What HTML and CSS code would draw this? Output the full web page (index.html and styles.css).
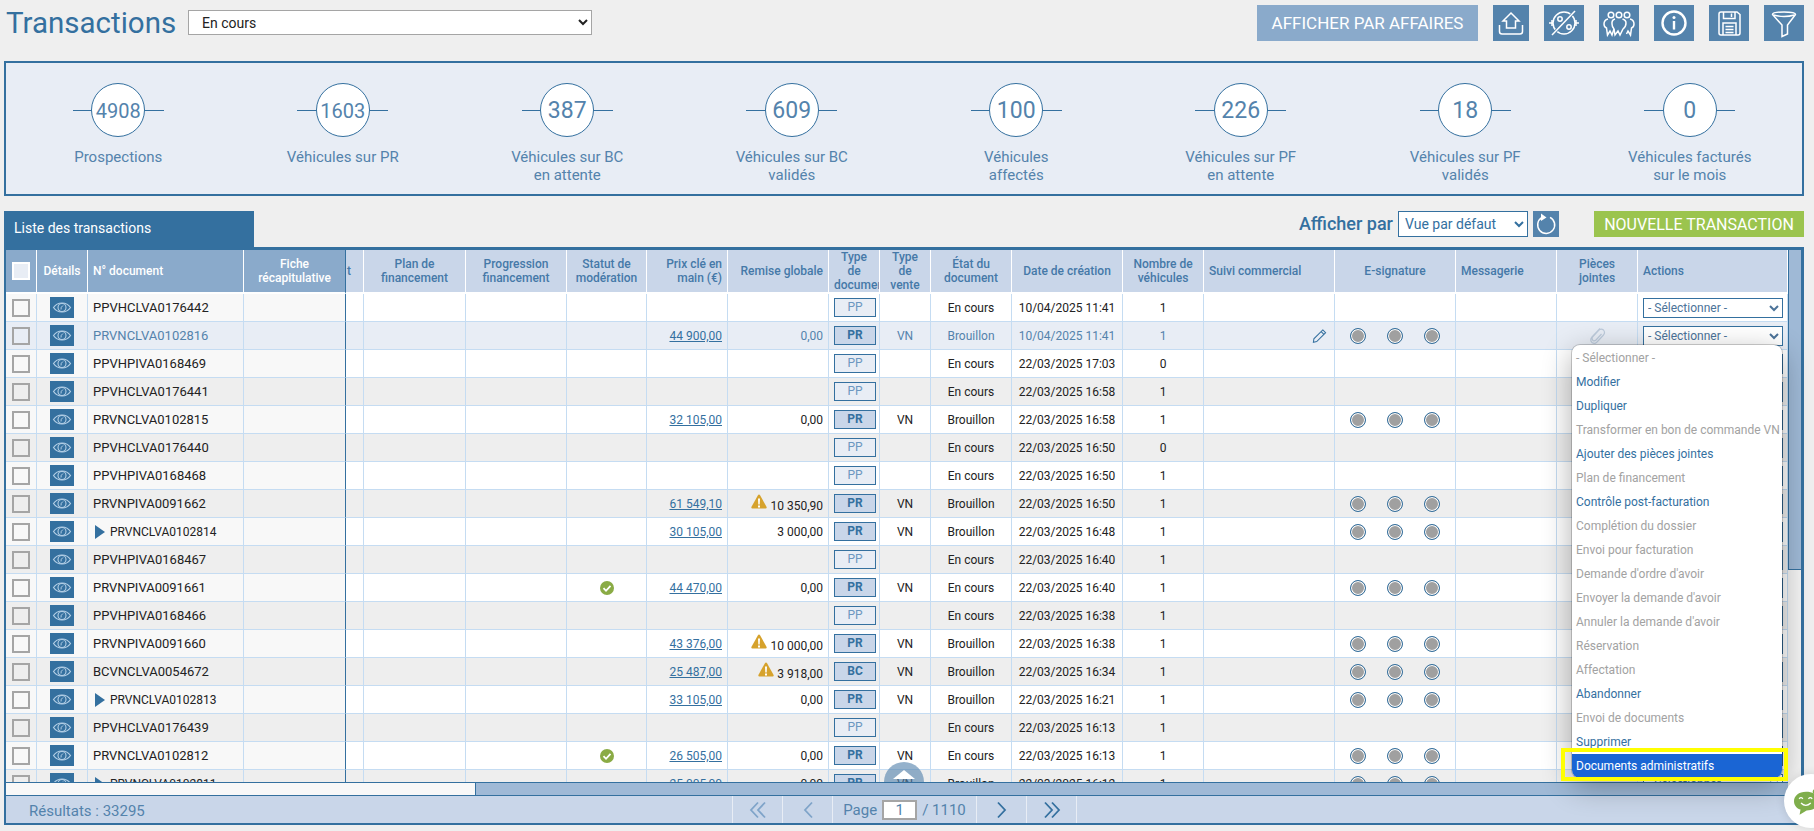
FILE: index.html
```html
<!DOCTYPE html>
<html lang="fr">
<head>
<meta charset="utf-8">
<title>Transactions</title>
<link rel="stylesheet" href="styles.css">
</head>
<body>
<svg class="defs" aria-hidden="true">
  <symbol id="eye" viewBox="0 0 24 21"><path d="M3.5 10.5C7.5 4.5 16.5 4.5 20.500 10.5C16.500 16.500 7.500 16.500 3.500 10.500Z" fill="none" stroke="#b4cfe6" stroke-width="1.2"/><circle cx="12" cy="10.500" r="4" fill="none" stroke="#b4cfe6" stroke-width="1.100"/><path d="M11 12.500Q10.500 10 13 8.500" fill="none" stroke="#b4cfe6"/></symbol>
  <symbol id="tri" viewBox="0 0 10 14"><path d="M0 0L10 7L0 14Z" fill="#34709f"/></symbol>
  <symbol id="warn" viewBox="0 0 16 15"><path d="M8 .5Q8.700 .5 9.200 1.400L15.600 13Q16 14.500 14.600 14.500H1.400Q0 14.500 .4 13L6.800 1.400Q7.300 .5 8 .5Z" fill="#d6a22c"/><path d="M7 4.500h2l-.3 6h-1.400ZM7 11.500h2v2H7Z" fill="#fff"/></symbol>
  <symbol id="ok" viewBox="0 0 14 14"><circle cx="7" cy="7" r="7" fill="#8aab45"/><path d="M3.500 7.200L6 9.800L10.500 4.800" fill="none" stroke="#fff" stroke-width="1.800"/></symbol>
</svg>

<div class="page">
  <header class="topbar">
    <h1 class="title">Transactions</h1>
    <select class="state-select"><option>En cours</option></select>
    <div class="spacer"></div>
    <button class="btn-affaires">AFFICHER PAR AFFAIRES</button>
    <div class="tools">
      <span class="tool tool-narrow"><svg viewBox="0 0 36 36"><path d="M18 8L26 16H22.500V23H13.500V16H10Z M6.500 20V26.500Q6.500 29 9 29H27Q29.500 29 29.500 26.500V20"/></svg></span>
      <span class="tool"><svg viewBox="0 0 40 36"><circle cx="20" cy="18" r="11"/><path d="M5 18H9M31 18H35M8 15V21M32 15V21"/><circle cx="16" cy="14" r="2.200"/><circle cx="25" cy="22" r="2.200"/><path class="cut" d="M9 29L32 5"/><path d="M8 30L31 6"/></svg></span>
      <span class="tool"><svg viewBox="0 0 40 36"><circle cx="12" cy="10" r="2.800"/><circle cx="20" cy="10" r="2.800"/><circle cx="28" cy="10" r="2.800"/><path d="M9 14Q5 15 5 19Q5 22 7.500 23L8.500 30L11 26L13 30L15 24"/><path d="M16 14Q12.500 15 13 19Q13 22 15 24L16 30L19 26L21 30L24 24Q27 22 27 18Q27 15 23.500 14"/><path d="M31 14Q35 15 35 19Q35 22 32.500 23L31.500 30L29 26L27.500 29"/></svg></span>
      <span class="tool"><svg viewBox="0 0 40 36"><circle class="thick" cx="20" cy="18" r="11.500"/><circle class="dot" cx="20" cy="12.500" r="1.500"/><path class="thick" d="M20 16V24.500"/></svg></span>
      <span class="tool"><svg viewBox="0 0 40 36"><path d="M10 9Q10 7 12 7H28L31 9.500V28Q31 30 29 30H12Q10 30 10 28Z"/><path d="M14.500 7V13.500H26V7M22.500 8.500V12"/><path d="M14 30V18H27V30M16.500 21.500H24.500M16.500 24.500H24.500M16.500 27.500H24.500"/></svg></span>
      <span class="tool"><svg viewBox="0 0 40 36"><path d="M8.500 9.500Q8.500 7 20 7Q31.500 7 31.500 9.500L23.500 20V29L18 31.500V20Z"/><path d="M9.500 10Q20 13 30.500 10"/></svg></span>
    </div>
  </header>

  <section class="stats">
    <div class="stat"><div class="ring"><span class="num num-sm">4908</span></div><p>Prospections</p></div>
    <div class="stat"><div class="ring"><span class="num num-sm">1603</span></div><p>Véhicules sur PR</p></div>
    <div class="stat"><div class="ring"><span class="num">387</span></div><p>Véhicules sur BC<br>en attente</p></div>
    <div class="stat"><div class="ring"><span class="num">609</span></div><p>Véhicules sur BC<br>validés</p></div>
    <div class="stat"><div class="ring"><span class="num">100</span></div><p>Véhicules<br>affectés</p></div>
    <div class="stat"><div class="ring"><span class="num">226</span></div><p>Véhicules sur PF<br>en attente</p></div>
    <div class="stat"><div class="ring"><span class="num">18</span></div><p>Véhicules sur PF<br>validés</p></div>
    <div class="stat"><div class="ring"><span class="num">0</span></div><p>Véhicules facturés<br>sur le mois</p></div>
  </section>

  <div class="tabbar">
    <div class="tab">Liste des transactions</div>
    <div class="spacer"></div>
    <span class="view-label">Afficher par</span>
    <select class="view-select"><option>Vue par défaut</option></select>
    <span class="refresh"><svg viewBox="0 0 26 26"><path d="M9 6.500A8.500 8.500 0 1 0 17 6.300"/><path class="fillw" d="M8 2.500L13.500 6.500L8 10Z"/></svg></span>
    <button class="btn-new">NOUVELLE TRANSACTION</button>
  </div>

  <section class="panel">
    <div class="grid-row">
      <div class="table-wrap">
        <table class="tx">
          <colgroup><col class="w31"><col class="w51"><col class="w156"><col class="w102"><col class="w18"><col class="w102"><col class="w101"><col class="w80"><col class="w81"><col class="w101"><col class="w51"><col class="w51"><col class="w81"><col class="w111"><col class="w81"><col class="w131"><col class="w121"><col class="w101"><col class="w81"><col class="w150"></colgroup>
          <thead><tr>
            <th><span class="cb cb-head"></span></th><th>Détails</th><th class="l">N° document</th><th>Fiche récapitulative</th><th class="clip">t</th><th>Plan de financement</th><th>Progression financement</th><th>Statut de modération</th><th class="r">Prix clé en main (€)</th><th class="r">Remise globale</th><th>Type de document</th><th>Type de vente</th><th>État du document</th><th>Date de création</th><th>Nombre de véhicules</th><th class="l">Suivi commercial</th><th>E-signature</th><th class="l">Messagerie</th><th>Pièces jointes</th><th class="l">Actions</th>
          </tr></thead>
          <tbody>
            <tr class="w"><td><span class="cb"></span></td><td><svg class="eye"><use href="#eye"/></svg></td><td class="l">PPVHCLVA0176442</td><td></td><td></td><td></td><td></td><td></td><td></td><td></td><td><b class="bd pp">PP</b></td><td></td><td>En cours</td><td>10/04/2025 11:41</td><td>1</td><td></td><td></td><td></td><td></td><td class="l"><select class="act"><option>- Sélectionner -</option></select></td></tr>
            <tr class="h"><td><span class="cb"></span></td><td><svg class="eye"><use href="#eye"/></svg></td><td class="l">PRVNCLVA0102816</td><td></td><td></td><td></td><td></td><td></td><td class="r"><a href="#">44 900,00</a></td><td class="r">0,00</td><td><b class="bd pr">PR</b></td><td>VN</td><td>Brouillon</td><td>10/04/2025 11:41</td><td>1</td><td class="r"><svg class="pencil" viewBox="0 0 16 16"><path d="M11.500 1.500L14.500 4.500L5 14L1.500 14.800L2 11ZM9.800 3.300L12.700 6.200"/></svg></td><td><div class="dots"><i></i><i></i><i></i></div></td><td></td><td><svg class="clipi" viewBox="0 0 18 20"><path d="M12 2.500L4 11Q1.500 14 4 16.500Q6.500 18.500 9 16L15.500 9Q17.500 6.500 15.500 4Q13 2 10.500 4.500L4.500 11Q3.500 13 5 14.500Q6.500 15.500 8 14L13.500 8"/></svg></td><td class="l"><select class="act"><option>- Sélectionner -</option></select></td></tr>
            <tr class="w"><td><span class="cb"></span></td><td><svg class="eye"><use href="#eye"/></svg></td><td class="l">PPVHPIVA0168469</td><td></td><td></td><td></td><td></td><td></td><td></td><td></td><td><b class="bd pp">PP</b></td><td></td><td>En cours</td><td>22/03/2025 17:03</td><td>0</td><td></td><td></td><td></td><td></td><td class="l"><select class="act"><option>- Sélectionner -</option></select></td></tr>
            <tr class="g"><td><span class="cb"></span></td><td><svg class="eye"><use href="#eye"/></svg></td><td class="l">PPVHCLVA0176441</td><td></td><td></td><td></td><td></td><td></td><td></td><td></td><td><b class="bd pp">PP</b></td><td></td><td>En cours</td><td>22/03/2025 16:58</td><td>1</td><td></td><td></td><td></td><td></td><td class="l"><select class="act"><option>- Sélectionner -</option></select></td></tr>
            <tr class="w"><td><span class="cb"></span></td><td><svg class="eye"><use href="#eye"/></svg></td><td class="l">PRVNCLVA0102815</td><td></td><td></td><td></td><td></td><td></td><td class="r"><a href="#">32 105,00</a></td><td class="r">0,00</td><td><b class="bd pr">PR</b></td><td>VN</td><td>Brouillon</td><td>22/03/2025 16:58</td><td>1</td><td></td><td><div class="dots"><i></i><i></i><i></i></div></td><td></td><td></td><td class="l"><select class="act"><option>- Sélectionner -</option></select></td></tr>
            <tr class="g"><td><span class="cb"></span></td><td><svg class="eye"><use href="#eye"/></svg></td><td class="l">PPVHCLVA0176440</td><td></td><td></td><td></td><td></td><td></td><td></td><td></td><td><b class="bd pp">PP</b></td><td></td><td>En cours</td><td>22/03/2025 16:50</td><td>0</td><td></td><td></td><td></td><td></td><td class="l"><select class="act"><option>- Sélectionner -</option></select></td></tr>
            <tr class="w"><td><span class="cb"></span></td><td><svg class="eye"><use href="#eye"/></svg></td><td class="l">PPVHPIVA0168468</td><td></td><td></td><td></td><td></td><td></td><td></td><td></td><td><b class="bd pp">PP</b></td><td></td><td>En cours</td><td>22/03/2025 16:50</td><td>1</td><td></td><td></td><td></td><td></td><td class="l"><select class="act"><option>- Sélectionner -</option></select></td></tr>
            <tr class="g"><td><span class="cb"></span></td><td><svg class="eye"><use href="#eye"/></svg></td><td class="l">PRVNPIVA0091662</td><td></td><td></td><td></td><td></td><td></td><td class="r"><a href="#">61 549,10</a></td><td class="r"><svg class="warn"><use href="#warn"/></svg>10 350,90</td><td><b class="bd pr">PR</b></td><td>VN</td><td>Brouillon</td><td>22/03/2025 16:50</td><td>1</td><td></td><td><div class="dots"><i></i><i></i><i></i></div></td><td></td><td></td><td class="l"><select class="act"><option>- Sélectionner -</option></select></td></tr>
            <tr class="w"><td><span class="cb"></span></td><td><svg class="eye"><use href="#eye"/></svg></td><td class="l child"><svg class="tri"><use href="#tri"/></svg>PRVNCLVA0102814</td><td></td><td></td><td></td><td></td><td></td><td class="r"><a href="#">30 105,00</a></td><td class="r">3 000,00</td><td><b class="bd pr">PR</b></td><td>VN</td><td>Brouillon</td><td>22/03/2025 16:48</td><td>1</td><td></td><td><div class="dots"><i></i><i></i><i></i></div></td><td></td><td></td><td class="l"><select class="act"><option>- Sélectionner -</option></select></td></tr>
            <tr class="g"><td><span class="cb"></span></td><td><svg class="eye"><use href="#eye"/></svg></td><td class="l">PPVHPIVA0168467</td><td></td><td></td><td></td><td></td><td></td><td></td><td></td><td><b class="bd pp">PP</b></td><td></td><td>En cours</td><td>22/03/2025 16:40</td><td>1</td><td></td><td></td><td></td><td></td><td class="l"><select class="act"><option>- Sélectionner -</option></select></td></tr>
            <tr class="w"><td><span class="cb"></span></td><td><svg class="eye"><use href="#eye"/></svg></td><td class="l">PRVNPIVA0091661</td><td></td><td></td><td></td><td></td><td><svg class="ok"><use href="#ok"/></svg></td><td class="r"><a href="#">44 470,00</a></td><td class="r">0,00</td><td><b class="bd pr">PR</b></td><td>VN</td><td>En cours</td><td>22/03/2025 16:40</td><td>1</td><td></td><td><div class="dots"><i></i><i></i><i></i></div></td><td></td><td></td><td class="l"><select class="act"><option>- Sélectionner -</option></select></td></tr>
            <tr class="g"><td><span class="cb"></span></td><td><svg class="eye"><use href="#eye"/></svg></td><td class="l">PPVHPIVA0168466</td><td></td><td></td><td></td><td></td><td></td><td></td><td></td><td><b class="bd pp">PP</b></td><td></td><td>En cours</td><td>22/03/2025 16:38</td><td>1</td><td></td><td></td><td></td><td></td><td class="l"><select class="act"><option>- Sélectionner -</option></select></td></tr>
            <tr class="w"><td><span class="cb"></span></td><td><svg class="eye"><use href="#eye"/></svg></td><td class="l">PRVNPIVA0091660</td><td></td><td></td><td></td><td></td><td></td><td class="r"><a href="#">43 376,00</a></td><td class="r"><svg class="warn"><use href="#warn"/></svg>10 000,00</td><td><b class="bd pr">PR</b></td><td>VN</td><td>Brouillon</td><td>22/03/2025 16:38</td><td>1</td><td></td><td><div class="dots"><i></i><i></i><i></i></div></td><td></td><td></td><td class="l"><select class="act"><option>- Sélectionner -</option></select></td></tr>
            <tr class="g"><td><span class="cb"></span></td><td><svg class="eye"><use href="#eye"/></svg></td><td class="l">BCVNCLVA0054672</td><td></td><td></td><td></td><td></td><td></td><td class="r"><a href="#">25 487,00</a></td><td class="r"><svg class="warn"><use href="#warn"/></svg>3 918,00</td><td><b class="bd pr">BC</b></td><td>VN</td><td>Brouillon</td><td>22/03/2025 16:34</td><td>1</td><td></td><td><div class="dots"><i></i><i></i><i></i></div></td><td></td><td></td><td class="l"><select class="act"><option>- Sélectionner -</option></select></td></tr>
            <tr class="w"><td><span class="cb"></span></td><td><svg class="eye"><use href="#eye"/></svg></td><td class="l child"><svg class="tri"><use href="#tri"/></svg>PRVNCLVA0102813</td><td></td><td></td><td></td><td></td><td></td><td class="r"><a href="#">33 105,00</a></td><td class="r">0,00</td><td><b class="bd pr">PR</b></td><td>VN</td><td>Brouillon</td><td>22/03/2025 16:21</td><td>1</td><td></td><td><div class="dots"><i></i><i></i><i></i></div></td><td></td><td></td><td class="l"><select class="act"><option>- Sélectionner -</option></select></td></tr>
            <tr class="g"><td><span class="cb"></span></td><td><svg class="eye"><use href="#eye"/></svg></td><td class="l">PPVHCLVA0176439</td><td></td><td></td><td></td><td></td><td></td><td></td><td></td><td><b class="bd pp">PP</b></td><td></td><td>En cours</td><td>22/03/2025 16:13</td><td>1</td><td></td><td></td><td></td><td></td><td class="l"><select class="act"><option>- Sélectionner -</option></select></td></tr>
            <tr class="w"><td><span class="cb"></span></td><td><svg class="eye"><use href="#eye"/></svg></td><td class="l">PRVNCLVA0102812</td><td></td><td></td><td></td><td></td><td><svg class="ok"><use href="#ok"/></svg></td><td class="r"><a href="#">26 505,00</a></td><td class="r">0,00</td><td><b class="bd pr">PR</b></td><td>VN</td><td>En cours</td><td>22/03/2025 16:13</td><td>1</td><td></td><td><div class="dots"><i></i><i></i><i></i></div></td><td></td><td></td><td class="l"><select class="act"><option>- Sélectionner -</option></select></td></tr>
            <tr class="g"><td><span class="cb"></span></td><td><svg class="eye"><use href="#eye"/></svg></td><td class="l child"><svg class="tri"><use href="#tri"/></svg>PRVNCLVA0102811</td><td></td><td></td><td></td><td></td><td></td><td class="r"><a href="#">25 005,00</a></td><td class="r">0,00</td><td><b class="bd pr">PR</b></td><td>VN</td><td>Brouillon</td><td>22/03/2025 16:12</td><td>1</td><td></td><td><div class="dots"><i></i><i></i><i></i></div></td><td></td><td></td><td class="l"><select class="act"><option>- Sélectionner -</option></select></td></tr>
          </tbody>
        </table>
        <div class="to-top"><span class="to-top-arrow"></span></div>
      </div>
      <div class="vscroll"><div class="vthumb"></div></div>
    </div>
    <div class="hscroll"><div class="hthumb"></div><div class="htrack"></div></div>
    <footer class="foot">
      <div class="results">Résultats : 33295</div>
      <div class="pager">
        <span class="pg off"><svg viewBox="0 0 18 18"><path d="M9 1.500L2 9L9 16.500M16 1.500L9 9L16 16.500"/></svg></span>
        <span class="pg off"><svg viewBox="0 0 18 18"><path d="M13 1.500L6 9L13 16.500"/></svg></span>
        <span class="pg pg-page">Page <input class="page-input" value="1"> / 1110</span>
        <span class="pg"><svg viewBox="0 0 18 18"><path d="M5 1.500L12 9L5 16.500"/></svg></span>
        <span class="pg"><svg viewBox="0 0 18 18"><path d="M2 1.500L9 9L2 16.500M9 1.500L16 9L9 16.500"/></svg></span>
      </div>
    </footer>

    <div class="menu">
      <div>- Sélectionner -</div>
      <div class="on">Modifier</div>
      <div class="on">Dupliquer</div>
      <div>Transformer en bon de commande VN</div>
      <div class="on">Ajouter des pièces jointes</div>
      <div>Plan de financement</div>
      <div class="on">Contrôle post-facturation</div>
      <div>Complétion du dossier</div>
      <div>Envoi pour facturation</div>
      <div>Demande d'ordre d'avoir</div>
      <div>Envoyer la demande d'avoir</div>
      <div>Annuler la demande d'avoir</div>
      <div>Réservation</div>
      <div>Affectation</div>
      <div class="on">Abandonner</div>
      <div>Envoi de documents</div>
      <div class="on">Supprimer</div>
      <div class="active">Documents administratifs</div>
    </div>
    <div class="marker"></div>
  </section>
</div>

<div class="chat"><svg viewBox="0 0 30 30"><path d="M13 3C5 3 0 7.500 0 13C0 18 4 21.500 7 22L6 27.500L13.500 23C22 23 27 18 27 13C27 7.500 21 3 13 3Z" fill="#7fae4c"/><circle cx="23" cy="3" r="3" fill="#7fae4c"/><path d="M5.500 10.500Q7.500 8 9.500 10.500M15.500 10.500Q17.500 8 19.500 10.500M7.500 15Q12.500 20 18 15" fill="none" stroke="#fff" stroke-width="1.400"/></svg></div>
</body>
</html>
```
FILE: styles.css
```css
* { box-sizing: border-box; }
html, body { margin: 0; height: 831px; overflow: hidden; }
body { background: #efefef; font-family: Roboto, "Liberation Sans", sans-serif; color: #222; position: relative; }
.defs { position: absolute; width: 0; height: 0; }
.spacer { flex: 1; }
.page { padding: 5px 10px 0 4px; }

/* top bar */
.topbar { display: flex; align-items: flex-start; height: 36px; }
.title { width: 172px; margin: 0 10px 0 2px; font-size: 29.500px; font-weight: 400; line-height: 36px; color: #34709f; white-space: nowrap; }
.state-select { width: 404px; height: 25px; margin-top: 5px; padding-left: 9px; font: 14px Roboto, sans-serif; background: #fff; border: 1px solid #a5a5a5; border-radius: 0; color: #222; }
.btn-affaires { width: 221px; height: 36px; border: 0; background: #8aaacb; color: #fff; font: 400 17px Roboto, sans-serif; padding: 0; }
.tools { display: flex; gap: 15px; margin-left: 15px; }
.tool { width: 40px; height: 36px; background: #5483ac; display: block; }
.tool-narrow { width: 36px; }
.tool svg { display: block; width: 100%; height: 100%; fill: none; stroke: #fff; stroke-width: 1.5; }
.tool .thick { stroke-width: 2.4; }
.tool .dot { fill: #fff; stroke: none; }
.tool .cut { stroke: #5483ac; stroke-width: 3; }

/* statistics */
.stats { display: flex; height: 135px; margin-top: 20px; background: #e8edf5; border: 2px solid #34709f; padding-top: 20px; }
.stat { flex: 1; text-align: center; }
.ring { position: relative; width: 91px; height: 54px; margin: 0 auto; display: flex; justify-content: center; align-items: center; background: linear-gradient(#34709f, #34709f) center / 100% 1px no-repeat; }
.num { width: 54px; height: 54px; border: 1px solid #34709f; border-radius: 50%; background: #fff; color: #5483ac; font-size: 23px; line-height: 54px; }
.num-sm { font-size: 20px; }
.stat p { margin: 11px 0 0; font-size: 15px; line-height: 18px; color: #5483ac; }

/* tab row */
.tabbar { display: flex; align-items: flex-start; height: 36px; margin-top: 15px; }
.tab { width: 250px; height: 36px; padding-left: 10px; line-height: 34px; background: #34709f; color: #fff; font-size: 14px; }
.view-label { font-size: 18px; font-weight: 500; line-height: 26px; color: #34709f; }
.view-select { width: 130px; height: 26px; margin-left: 5px; padding-left: 2px; font: 14px Roboto, sans-serif; color: #34709f; background: #fff; border: 1px solid #34709f; border-radius: 0; }
.refresh { width: 26px; height: 26px; margin-left: 5px; background: #5483ac; display: block; }
.refresh svg { display: block; width: 26px; height: 26px; fill: none; stroke: #fff; stroke-width: 1.5; }
.refresh .fillw { fill: #fff; stroke: none; }
.btn-new { width: 210px; height: 26px; margin-left: 35px; border: 0; padding: 0; background: #9bc44e; color: #fff; font: 400 16px Roboto, sans-serif; }

/* table panel */
.panel { position: relative; height: 578px; border: solid #34709f; border-width: 3px 3px 2px 2px; display: flex; flex-direction: column; }
.grid-row { display: flex; height: 532px; flex: none; min-height: 0; overflow: hidden; }
.table-wrap { position: relative; width: 1782px; height: 532px; overflow: hidden; }
.tx { width: 1782px; table-layout: fixed; border-collapse: separate; border-spacing: 0; font-size: 12px; }
.w18 { width: 18px; } .w31 { width: 31px; } .w51 { width: 51px; } .w80 { width: 80px; } .w81 { width: 81px; }
.w101 { width: 101px; } .w102 { width: 102px; } .w111 { width: 111px; } .w121 { width: 121px; } .w131 { width: 131px; }
.w150 { width: 150px; } .w156 { width: 156px; }
.tx th { height: 42px; padding: 0 5px; overflow: hidden; background: #c9d6e9; color: #4579a8; font-weight: 500; font-size: 12px; line-height: 14px; text-align: center; border-right: 1px solid #fff; border-bottom: 2px solid #fff; }
.tx th:first-child { padding: 0; }
.tx th:nth-child(-n+4) { background: #8aaacb; color: #fff; }
.tx th:nth-child(4) { border-right: 1px solid #34709f; }
.tx th.l { text-align: left; }
.tx th.r { text-align: right; }
.tx th.clip { padding: 0 0 0 1px; text-align: left; }
.tx td { height: 28px; padding: 0 5px; overflow: hidden; white-space: nowrap; text-align: center; border-right: 1px solid #c5dcf2; border-bottom: 1px solid #c5dcf2; }
.tx td.l { text-align: left; padding-left: 5px; }
.tx td:nth-child(3) { font-size: 13px; }
.tx td.child { font-size: 12px; }
.tx td.r { text-align: right; }
.tx td:nth-child(4) { border-right: 1px solid #34709f; }
.tx td:first-child, .tx td:nth-child(2) { padding: 0; }
tr.w td { background: #fff; }
tr.w td:nth-child(-n+4) { background: #f8f8f8; }
tr.g td { background: #eee; }
tr.h td { background: #e8edf5; color: #5483ac; }
.tx a { color: #34709f; }
.cb { display: block; width: 18px; height: 18px; margin: 0 auto 0 6px; border: 2px solid #a5a5a5; }
.cb-head { border-color: #fff; background: #e8edf5; }
.eye { display: block; width: 24px; height: 21px; margin: 0 auto; background: #34709f; }
.tri { display: inline-block; width: 10px; height: 14px; margin: 0 5px 0 2px; vertical-align: -3px; }
.warn { display: inline-block; width: 16px; height: 15px; margin-right: 3px; vertical-align: 1px; }
.ok { display: block; width: 14px; height: 14px; margin: 0 auto; }
.bd { display: block; width: 42px; height: 19px; margin: 0 auto; border: 1px solid #34709f; line-height: 17px; font-size: 12px; }
.pp { background: #e8edf5; color: #6c97c0; font-weight: 400; }
.pr { background: #c9d6e9; color: #34709f; font-weight: 700; }
.dots { display: flex; justify-content: center; gap: 21px; }
.dots i { display: block; width: 16px; height: 16px; border-radius: 50%; background: #a0a0a0; border: 1px solid #34709f; box-shadow: inset 0 0 0 1px #fff; }
.pencil { display: block; width: 15px; height: 16px; margin: 0 0 0 auto; margin-right: 2px; fill: none; stroke: #34709f; stroke-width: 1.100; }
.clipi { display: block; width: 18px; height: 20px; margin: 0 auto; fill: none; stroke: #bccadb; stroke-width: 1.200; }
.act { display: block; width: 140px; height: 20px; padding: 0; font: 12px Roboto, sans-serif; color: #4c7399; background: #fff; border: 1px solid #34709f; border-radius: 0; }
.to-top { position: absolute; left: 878px; top: 512px; width: 40px; height: 40px; border-radius: 50%; background: rgba(84, 131, 172, .62); display: flex; justify-content: center; }
.to-top-arrow { width: 0; height: 0; margin-top: 8px; border-left: 11px solid transparent; border-right: 11px solid transparent; border-bottom: 9px solid #fff; }

.vscroll { flex: 1; background: #f3f3f3; }
.vthumb { height: 320px; background: #9fb9d6; border: solid #34709f; border-width: 0 0 1px 1px; }
.hscroll { display: flex; flex: 0 0 13px; width: 1782px; border-top: 1px solid #34709f; }
.hthumb { width: 469px; background: #f8f8f8; }
.htrack { flex: 1; background: #9fb9d6; border-left: 1px solid #34709f; }

.foot { display: flex; flex: 0 0 28px; background: #c9d6e9; border-top: 1px solid #34709f; }
.results { width: 726px; padding: 3px 0 0 23px; font-size: 15px; line-height: 24px; color: #5483ac; }
.pager { display: flex; border-right: 1px solid #e8edf5; }
.pg { width: 50px; display: flex; align-items: center; justify-content: center; border-left: 1px solid #e8edf5; color: #34709f; }
.pg svg { display: block; width: 18px; height: 18px; fill: none; stroke: #34709f; stroke-width: 1.800; }
.pg.off svg { stroke: #7fa4c9; }
.pg-page { width: 144px; gap: 5px; font-size: 15px; color: #5483ac; }
.page-input { width: 35px; height: 20px; padding: 0; text-align: center; font: 15px Roboto, sans-serif; color: #5483ac; border: 2px solid #a5a5a5; background: #fff; border-radius: 0; }

/* open dropdown */
.menu { position: absolute; left: 1566px; top: 95px; width: 210px; padding-top: 1px; background: #fff; border-radius: 8px; box-shadow: 0 8px 30px rgba(0, 0, 0, .32), 0 0 0 1px rgba(0, 0, 0, .18); font-size: 12px; color: #a2a2a2; overflow: hidden; }
.menu div { height: 24px; padding-left: 4px; line-height: 24px; white-space: nowrap; }
.menu .on { color: #34709f; }
.menu .active { background: #1a65d4; color: #fff; }
.marker { position: absolute; left: 1555px; top: 498px; width: 227px; height: 33px; border: 4px solid #ffff00; }

.chat { position: absolute; left: 1784px; top: 774px; width: 54px; height: 54px; border-radius: 50%; background: #fff; box-shadow: 0 0 10px rgba(0, 0, 0, .12); padding: 15px 0 0 10px; }
.chat svg { display: block; width: 28px; height: 28px; }
```
